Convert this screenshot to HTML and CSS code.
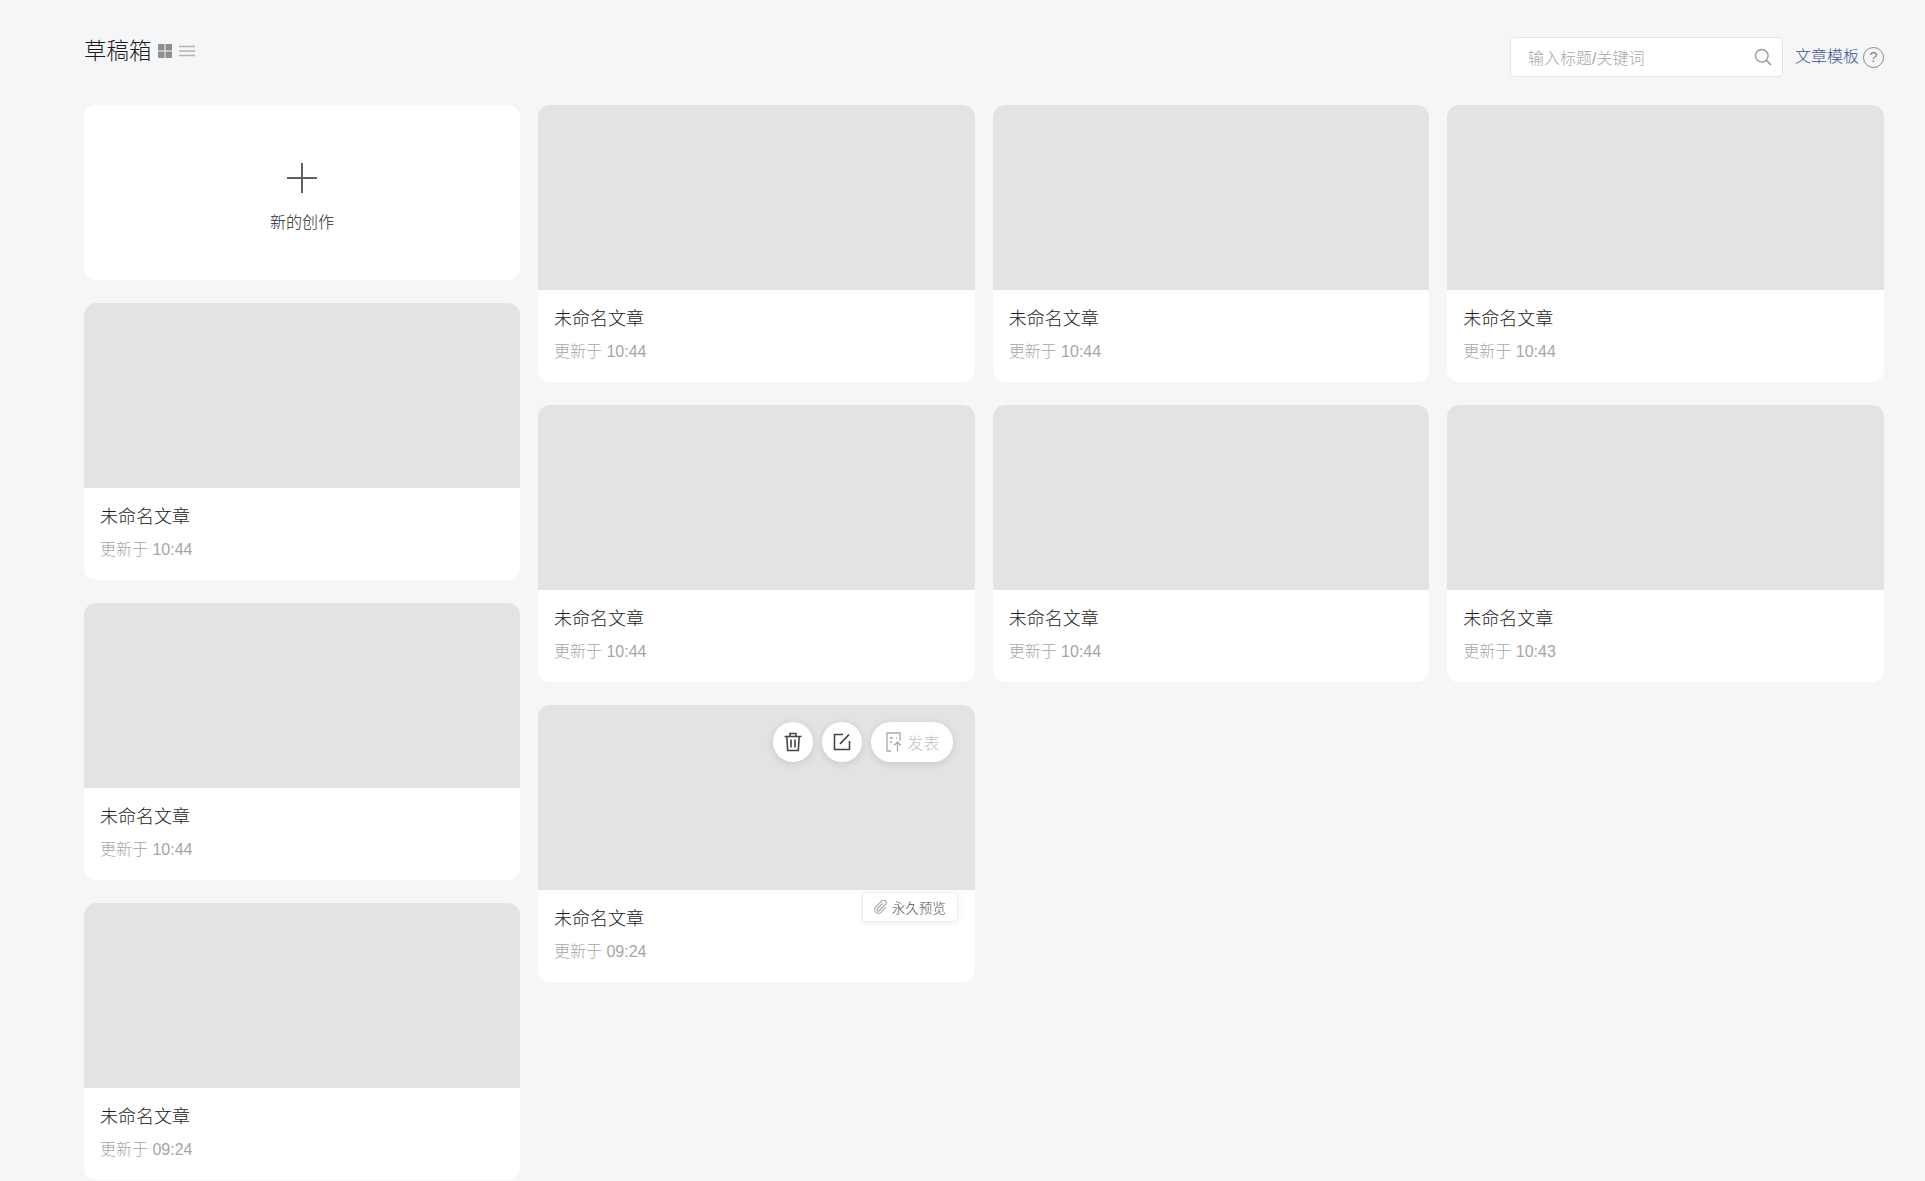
FILE: index.html
```html
<!DOCTYPE html>
<html lang="zh-CN">
<head>
<meta charset="utf-8">
<title>草稿箱</title>
<link rel="stylesheet" href="styles.css">
</head>
<body>
<main class="page">
  <header class="header">
    <div class="header-left">
      <h1 class="page-title">草稿箱</h1>
      <svg class="view-icon" width="14" height="14" viewBox="0 0 14 14"><path fill="#8d8e90" d="M1 0h5.500v6.500H0V1a1 1 0 0 1 1-1zM7.500 0H13a1 1 0 0 1 1 1v5.500H7.500zM0 7.500h6.500V14H1a1 1 0 0 1-1-1zM7.500 7.500H14V13a1 1 0 0 1-1 1H7.500z"/></svg>
      <svg class="view-icon view-icon-list" width="16" height="14" viewBox="0 0 16 14"><path stroke="#b2b3b5" stroke-width="1.500" fill="none" d="M0 2.500h16M0 7h16M0 11.500h16"/></svg>
    </div>
    <div class="header-right">
      <div class="search">
        <span class="search-placeholder">输入标题/关键词</span>
        <svg width="18" height="18" viewBox="0 0 18 18"><circle cx="7.800" cy="7.800" r="6.300" fill="none" stroke="#999" stroke-width="1.400"/><path d="M12.400 12.400l4.600 4.600" stroke="#999" stroke-width="1.600" fill="none"/></svg>
      </div>
      <a class="template-link">文章模板</a>
      <span class="help">?</span>
    </div>
  </header>

  <section class="board">
    <div class="column">
      <div class="card new-card">
        <svg width="30" height="30" viewBox="0 0 30 30"><path d="M15 0v30M0 15h30" stroke="#5f6064" stroke-width="2" fill="none"/></svg>
        <span class="new-label">新的创作</span>
      </div>
      <article class="card"><div class="thumb"></div><div class="info"><div class="name">未命名文章</div><div class="time">更新于 10:44</div></div></article>
      <article class="card"><div class="thumb"></div><div class="info"><div class="name">未命名文章</div><div class="time">更新于 10:44</div></div></article>
      <article class="card"><div class="thumb"></div><div class="info"><div class="name">未命名文章</div><div class="time">更新于 09:24</div></div></article>
    </div>
    <div class="grid">
      <article class="card"><div class="thumb"></div><div class="info"><div class="name">未命名文章</div><div class="time">更新于 10:44</div></div></article>
      <article class="card"><div class="thumb"></div><div class="info"><div class="name">未命名文章</div><div class="time">更新于 10:44</div></div></article>
      <article class="card"><div class="thumb"></div><div class="info"><div class="name">未命名文章</div><div class="time">更新于 10:44</div></div></article>
      <article class="card"><div class="thumb"></div><div class="info"><div class="name">未命名文章</div><div class="time">更新于 10:44</div></div></article>
      <article class="card"><div class="thumb"></div><div class="info"><div class="name">未命名文章</div><div class="time">更新于 10:44</div></div></article>
      <article class="card"><div class="thumb"></div><div class="info"><div class="name">未命名文章</div><div class="time">更新于 10:43</div></div></article>
      <article class="card card-hover">
        <div class="thumb">
          <div class="actions">
            <span class="round-btn">
              <svg width="20" height="20" viewBox="0 0 20 20" fill="none" stroke="#444" stroke-width="1.600"><path d="M1.500 4.500h17M7 4.500V1.500h6v3M3.800 4.500l.9 14h10.600l.9-14M8 7.500v8M12 7.500v8"/></svg>
            </span>
            <span class="round-btn">
              <svg width="18" height="18" viewBox="0 0 18 18" fill="none" stroke="#444" stroke-width="1.600"><path d="M10 1.500H1.500v15h15V8"/><path d="M7 11l9-9.500" stroke-width="1.800"/></svg>
            </span>
            <span class="publish-btn">
              <svg width="16" height="20" viewBox="0 0 16 20" fill="none" stroke="#a9a9a9" stroke-width="1.300"><path d="M5 19H1V1h13v8M4 6h3M4 10h2M10 6h1"/><path d="M11.500 19v-8M8 13.500l3.500-3.500 3.500 3.500"/></svg>
              <span class="publish-label">发表</span>
            </span>
          </div>
        </div>
        <div class="info"><div class="name">未命名文章</div><div class="time">更新于 09:24</div></div>
        <span class="preview-btn">
          <svg width="14" height="14" viewBox="0 0 14 14" fill="none" stroke="#aaa" stroke-width="1.200"><path d="M8.500 3.500l-5 5a1.400 1.400 0 0 0 2 2l6-6a2.600 2.600 0 0 0-3.700-3.700l-6 6a3.800 3.800 0 0 0 5.400 5.400l4.800-4.800"/></svg>
          <span>永久预览</span>
        </span>
      </article>
    </div>
  </section>
</main>
</body>
</html>
```
FILE: styles.css
```css
* { box-sizing: border-box; }
html, body { margin: 0; height: 100%; }
body {
  background: #f5f6f8;
  color: #222;
  font-family: "Liberation Sans", "Noto Sans CJK SC", sans-serif;
  font-weight: 300;
  overflow: hidden;
}
.page { padding: 0 41px 0 84px; }
.header {
  height: 105px;
  display: flex;
  justify-content: space-between;
  align-items: flex-start;
}
.header-left {
  display: flex;
  align-items: center;
  height: 34px;
  margin-top: 34px;
}
.page-title {
  margin: 2px 0 0;
  font-size: 22.500px;
  font-weight: 300;
  line-height: 34px;
  color: #1c1c1c;
}
.view-icon { margin-left: 6px; }
.view-icon-list { margin-left: 7px; }
.header-right {
  display: flex;
  align-items: center;
  margin-top: 37px;
  height: 40px;
}
.search {
  width: 273px;
  height: 40px;
  background: #fff;
  border: 1px solid #e5e6e8;
  border-radius: 4px;
  padding: 0 10px 0 17px;
  display: flex;
  align-items: center;
  justify-content: space-between;
}
.search-placeholder { font-size: 16px; color: #a8a8a8; }
.template-link { margin-left: 12px; font-size: 16px; color: #3f5090; line-height: 20px; margin-top: -1px; }
.help {
  width: 21px;
  height: 21px;
  margin-left: 4px;
  margin-top: 1px;
  border: 1.500px solid #8a8a8a;
  border-radius: 50%;
  color: #8a8a8a;
  font-size: 15px;
  line-height: 18px;
  text-align: center;
}
.board {
  display: grid;
  grid-template-columns: 436fr 1346fr;
  column-gap: 18px;
}
.column { display: flex; flex-direction: column; row-gap: 23px; }
.grid {
  display: grid;
  grid-template-columns: repeat(3, 1fr);
  column-gap: 18px;
  row-gap: 23px;
  align-content: start;
}
.card {
  position: relative;
  background: #fff;
  border-radius: 12px;
  overflow: hidden;
  height: 277px;
}
.new-card {
  height: 175px;
  display: flex;
  flex-direction: column;
  align-items: center;
  padding-top: 58px;
}
.new-label { margin-top: 18px; font-size: 16px; line-height: 24px; color: #1c1c1c; }
.thumb { position: relative; height: 185px; background: #e2e3e5; }
.info { padding: 16px 16px 0; }
.name { font-size: 18px; line-height: 26px; color: #1c1c1c; }
.time { margin-top: 8px; font-size: 16px; line-height: 24px; color: #a6a6a6; }
.actions {
  position: absolute;
  top: 17px;
  right: 22px;
  display: flex;
  gap: 9px;
}
.round-btn, .publish-btn {
  display: flex;
  align-items: center;
  justify-content: center;
  height: 40px;
  background: #fff;
  border-radius: 20px;
  box-shadow: 0 2px 8px rgba(0, 0, 0, .12);
}
.round-btn { width: 40px; }
.publish-btn { width: 82px; gap: 5px; padding-left: 2px; }
.publish-label { font-size: 16px; color: #c4c4c4; }
.preview-btn {
  position: absolute;
  top: 187px;
  right: 17px;
  width: 96px;
  height: 30px;
  display: flex;
  align-items: center;
  justify-content: center;
  gap: 4px;
  background: #fff;
  border: 1px solid #ececee;
  border-radius: 3px;
  box-shadow: 0 2px 6px rgba(0, 0, 0, .06);
  font-size: 13.500px;
  color: #4f4f4f;
}
```
